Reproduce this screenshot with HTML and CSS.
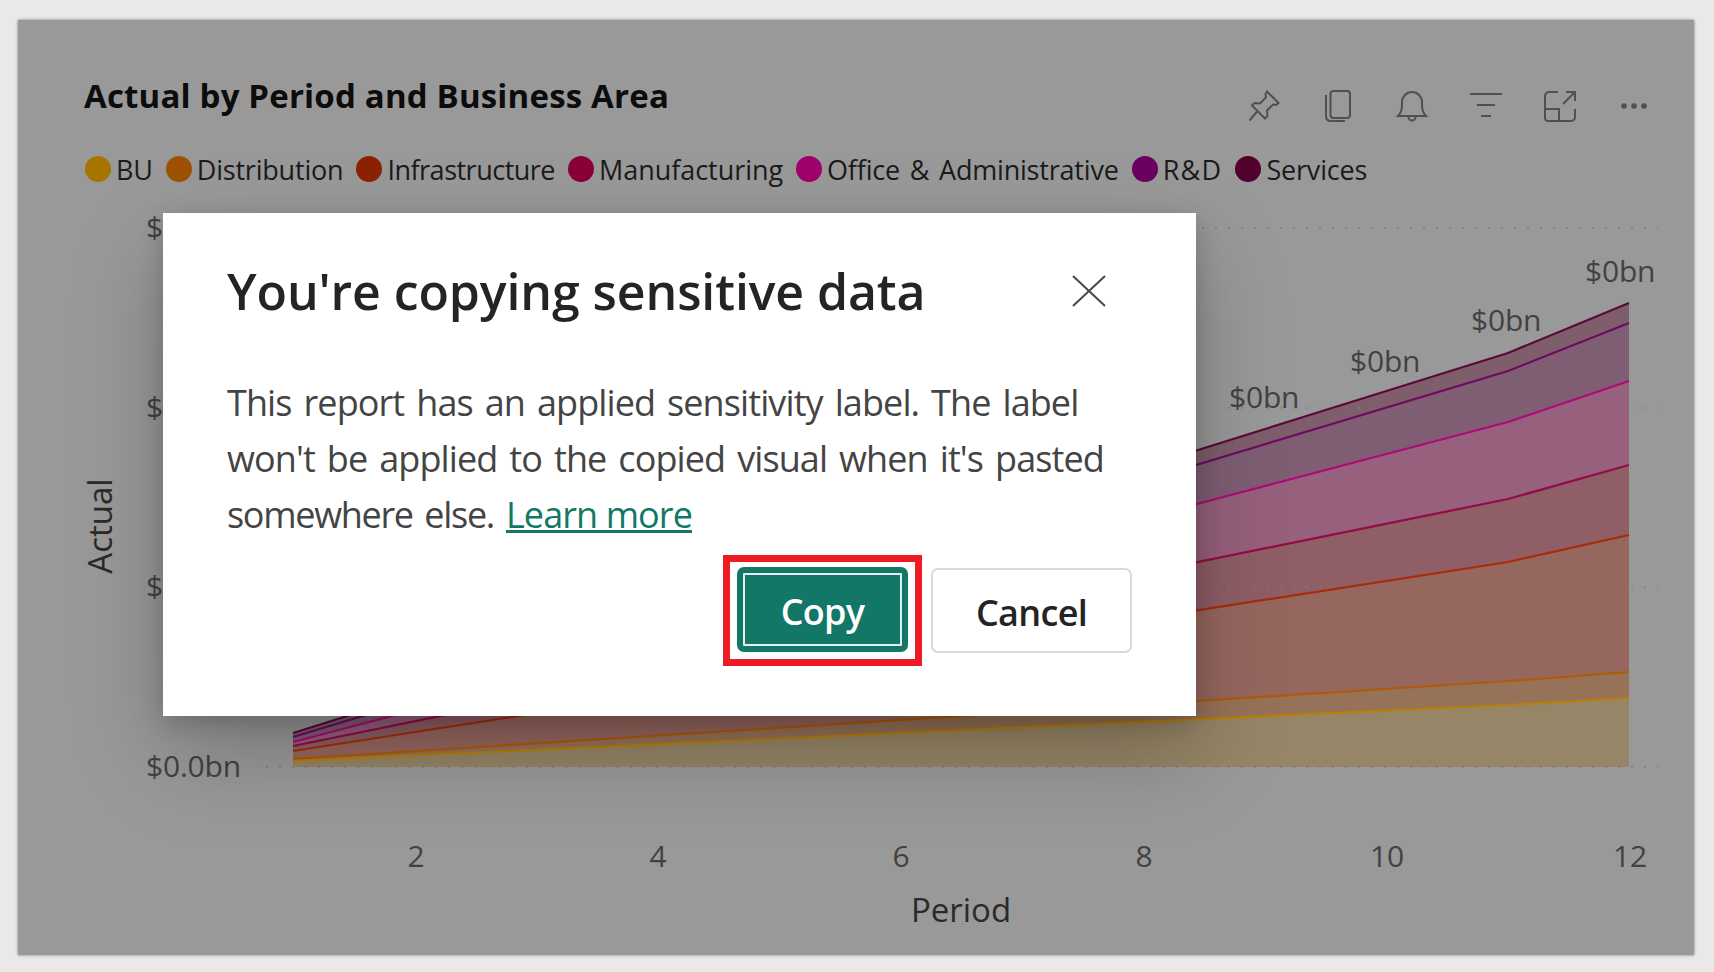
FILE: index.html
```html
<!DOCTYPE html>
<html lang="en">
<head>
  <meta charset="UTF-8">
  <title>Actual by Period and Business Area</title>
  <link rel="stylesheet" href="styles.css">
</head>
<body>
<div class="card">
  <div class="head">
    <h2 class="title">Actual by Period and Business Area</h2>
    <div class="tools">
      <svg class="tool" viewBox="0 0 32 32"><path d="M19 1.500 30.500 13 28 15l-3-.5-6 6 .5 5.500-2.500 2.500L4 15.500 6.500 13l5.500.5 6-6L17.500 4z M9.500 21 1.500 30.500"/></svg>
      <svg class="tool" viewBox="0 0 32 32"><rect x="8.500" y="1" width="19.500" height="27" rx="3"/><path d="M4 5v21c0 3 2 5 5 5h14"/></svg>
      <svg class="tool" viewBox="0 0 32 32"><path d="M2 26c3-3 4-6 4-11V12a10 10 0 0 1 20 0v3c0 5 1 8 4 11z M12.500 27a3.500 3.500 0 0 0 7 0"/></svg>
      <svg class="tool" viewBox="0 0 32 32"><path d="M0 4h32M7 15h18M11 26h10"/></svg>
      <svg class="tool" viewBox="0 0 32 32"><path d="M14 2H5C3 2 1 4 1 6v22c0 2 2 3 4 3h22c2 0 4-2 4-3v-9M1 19h14v12M19 14 31 2M22 2h9v9"/></svg>
      <svg class="tool" viewBox="0 0 32 32"><circle cx="6" cy="16" r="2.800" class="dot"/><circle cx="16" cy="16" r="2.800" class="dot"/><circle cx="26" cy="16" r="2.800" class="dot"/></svg>
    </div>
  </div>

  <div class="legend">
    <span class="item"><i class="bullet c-bu"></i>BU</span>
    <span class="item"><i class="bullet c-dist"></i>Distribution</span>
    <span class="item tight"><i class="bullet c-infra"></i>Infrastructure</span>
    <span class="item loose"><i class="bullet c-manu"></i>Manufacturing</span>
    <span class="item"><i class="bullet c-office"></i>Office &amp; Administrative</span>
    <span class="item wide"><i class="bullet c-rd"></i>R&amp;D</span>
    <span class="item"><i class="bullet c-serv"></i>Services</span>
  </div>

  <svg class="chart" viewBox="18 190 1676 765" width="1676" height="765">
    <polygon class="a-serv" points="293,733 1508,353 1629,303 1629,323 1508,371 293,737"/>
    <polygon class="a-rd" points="293,737 1508,371 1629,323 1629,381 1508,422 293,742"/>
    <polygon class="a-office" points="293,742 1508,422 1629,381 1629,465 1508,499 293,746"/>
    <polygon class="a-manu" points="293,746 1508,499 1629,465 1629,535 1508,562 293,751"/>
    <polygon class="a-infra" points="293,751 1508,562 1629,535 1629,672 1508,681 293,759"/>
    <polygon class="a-dist" points="293,759 1508,681 1629,672 1629,698 1508,705 293,761"/>
    <polygon class="a-bu" points="293,761 1508,705 1629,698 1629,767 293,767"/>
    <path class="grid" d="M266 228H1658M266 408H1658M266 587H1658M266 767H1658"/>
    <g class="lines">
      <polyline class="l-serv" points="293,733 1508,353 1629,303"/>
      <polyline class="l-rd" points="293,737 1508,371 1629,323"/>
      <polyline class="l-office" points="293,742 1508,422 1629,381"/>
      <polyline class="l-manu" points="293,746 1508,499 1629,465"/>
      <polyline class="l-infra" points="293,751 1508,562 1629,535"/>
      <polyline class="l-dist" points="293,759 1508,681 1629,672"/>
      <polyline class="l-bu" points="293,761 1508,705 1629,698"/>
    </g>
    <g class="tick">
      <text x="146" y="238">$</text>
      <text x="146" y="418">$</text>
      <text x="146" y="597">$</text>
      <text x="146" y="777">$0.0bn</text>
    </g>
    <g class="tick center">
      <text x="416" y="867">2</text>
      <text x="658" y="867">4</text>
      <text x="901" y="867">6</text>
      <text x="1144" y="867">8</text>
      <text x="1387" y="867">10</text>
      <text x="1630" y="867">12</text>
    </g>
    <text class="axis-name" x="961" y="922">Period</text>
    <text class="axis-name" transform="translate(112 526) rotate(-90)">Actual</text>
    <g class="tick">
      <text x="1229" y="408">$0bn</text>
      <text x="1350" y="372">$0bn</text>
      <text x="1471" y="331">$0bn</text>
      <text x="1585" y="282">$0bn</text>
    </g>
  </svg>

  <div class="dialog">
    <div class="dialog-head">
      <h1 class="dialog-title">You're copying sensitive data</h1>
      <svg class="close" viewBox="0 0 34 32"><path d="M1 1 33 31M33 1 1 31"/></svg>
    </div>
    <p class="dialog-text">This report has an applied sensitivity label. The label won't be applied to the copied visual when it's pasted <span class="last-line">somewhere else.</span> <a href="#">Learn more</a></p>
    <div class="dialog-actions">
      <span class="highlight"><button class="btn primary">Copy</button></span>
      <button class="btn">Cancel</button>
    </div>
  </div>
</div>
</body>
</html>
```

FILE: styles.css
```css
html, body { margin: 0; height: 100%; }
body { background: #e9e9e9; font-family: "Open Sans", "Noto Sans", sans-serif; overflow: hidden; }

.card { position: relative; width: 1676px; height: 935px; margin: 20px 0 0 18px; background: #999; box-shadow: 0 0 3px rgba(0,0,0,.45); overflow: hidden; }

.head { display: flex; justify-content: space-between; padding: 54px 44px 0 66px; height: 70px; }
.title { margin: 0; font-size: 33px; line-height: 44px; font-weight: 700; color: #0c0c0c; letter-spacing: 0.18px; }
.tools { display: flex; gap: 42px; padding-top: 16px; }
.tool { width: 32px; height: 32px; fill: none; stroke: #505050; stroke-width: 2; }
.tool .dot { fill: #505050; stroke: none; }

.legend { display: flex; gap: 13px; padding-left: 67px; margin-top: 4px; height: 42px; align-items: center; font-size: 27px; color: #1b1b1b; letter-spacing: -0.2px; word-spacing: 3px; }
.item { display: flex; align-items: center; gap: 5px; }
.item.tight { letter-spacing: -0.5px; }
.item.loose { letter-spacing: -0.05px; }
.item.wide { letter-spacing: 1.3px; }
.bullet { width: 26px; height: 26px; border-radius: 50%; }
.c-bu { background: #a87400; }
.c-dist { background: #9c5200; }
.c-infra { background: #8c2200; }
.c-manu { background: #8a003a; }
.c-office { background: #a0006a; }
.c-rd { background: #6b0060; }
.c-serv { background: #52002c; }

.chart { display: block; font-family: "Open Sans", "Noto Sans", sans-serif; }
.grid { stroke: #7c7c7c; stroke-opacity: .7; stroke-width: 2; stroke-dasharray: 2 11; fill: none; }
.a-serv { fill: #7f5e6c; }
.a-rd { fill: #7f5e74; }
.a-office { fill: #97607c; }
.a-manu { fill: #8f5e66; }
.a-infra { fill: #96675f; }
.a-dist { fill: #967258; }
.a-bu { fill: #968566; }
.lines polyline { fill: none; stroke-width: 2.200; stroke-linejoin: round; }
.l-serv { stroke: #5a0a38; }
.l-rd { stroke: #6e0a62; }
.l-office { stroke: #b00a78; }
.l-manu { stroke: #950a48; }
.l-infra { stroke: #a82c08; }
.l-dist { stroke: #b05a08; }
.l-bu { stroke: #b88008; }
.tick text { font-size: 30px; fill: #424242; letter-spacing: -0.2px; }
.tick.center text { text-anchor: middle; }
.axis-name { font-size: 33px; fill: #2a2a2a; text-anchor: middle; }

.dialog { position: absolute; left: 145px; top: 193px; width: 1033px; height: 503px; box-sizing: border-box; padding: 46px 64px 0; background: #fff; box-shadow: 0 38px 86px rgba(0,0,0,.22), 0 7px 22px rgba(0,0,0,.18); }
.dialog-head { display: flex; justify-content: space-between; align-items: center; padding-right: 26px; }
.dialog-title { margin: 0; font-size: 50px; line-height: 64px; font-weight: 600; color: #252423; letter-spacing: -0.1px; }
.close { width: 34px; height: 32px; fill: none; stroke: #484848; stroke-width: 2; }
.dialog-text { margin: 52px 0 0; font-size: 36px; line-height: 56px; color: #444; letter-spacing: -0.9px; word-spacing: 3.500px; width: 905px; }
.last-line { letter-spacing: -1.3px; }
.dialog-text a { color: #117865; text-decoration: underline; word-spacing: 0; }
.dialog-actions { display: flex; justify-content: flex-end; align-items: center; gap: 9px; margin-top: 12px; }
.highlight { display: flex; padding: 5px 7px 7px; border: 7px solid #ed1c24; }
.btn { width: 201px; height: 85px; box-sizing: border-box; border: 2px solid #d9d9d9; border-radius: 7px; background: #fff; color: #252423; font: 600 36px "Open Sans", "Noto Sans", sans-serif; letter-spacing: -0.7px; padding: 3px 0 0; }
.btn.primary { width: 171px; background: #137767; color: #fff; border: 0; outline: 2px solid #e4f0ee; outline-offset: -8px; }
```
